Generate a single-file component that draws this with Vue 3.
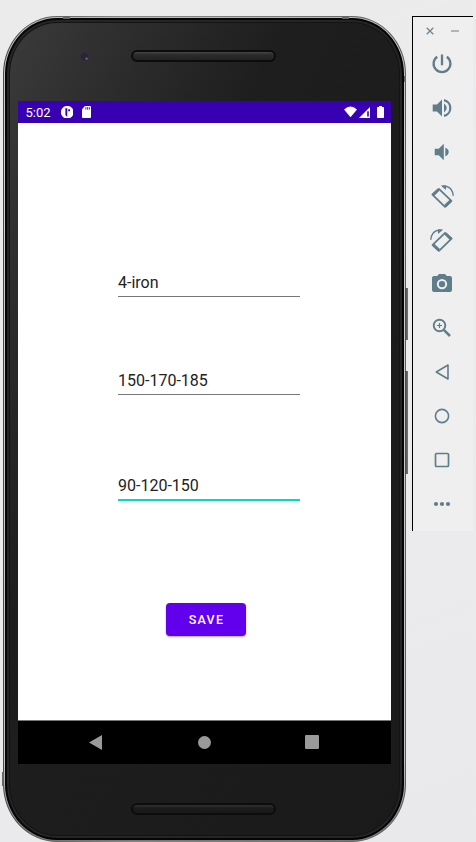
<script setup>
import { ref } from 'vue'

const fields = ref([
  { id: 'club', value: '4-iron' },
  { id: 'full', value: '150-170-185' },
  { id: 'short', value: '90-120-150', active: true },
])
</script>

<template>
  <main class="desktop">
    <section class="phone">
      <i class="side-key power"></i>
      <i class="side-key volume"></i>
      <i class="seam seam-tl"></i>
      <i class="seam seam-tr"></i>
      <i class="seam seam-bl"></i>
      <i class="seam seam-br"></i>
      <div class="rim">
        <div class="face">
          <header class="forehead">
            <span class="camera"></span>
            <span class="speaker"></span>
          </header>

          <div class="screen">
            <div class="status">
              <span class="clock">5:02</span>
              <svg class="s-app" viewBox="0 0 12 12">
                <circle cx="6" cy="6" r="6.1" fill="#fff" />
                <path d="M4.2 2.2H6V10.2Q4.2 9.6 4.2 8Z" fill="#3700b3" />
                <path d="M6.9 3.2H8.7V5H6.9Z" fill="#3700b3" />
              </svg>
              <svg class="s-card" viewBox="0 0 9 12">
                <path d="M3 0H8Q9 0 9 1V11Q9 12 8 12H1Q0 12 0 11V3.2Z" fill="#fff" />
                <path d="M3.9 1.2V3.6M5.6 1.2V3.6M7.3 1.2V3.6" stroke="#3700b3" stroke-width=".9" />
              </svg>
              <span class="grow"></span>
              <svg class="s-wifi" viewBox="0 0 14 12">
                <path d="M0 3.2Q7 -2.8 14 3.2L7 11.6Z" fill="#fff" />
              </svg>
              <svg class="s-cell" viewBox="0 0 11 11">
                <path d="M11 0V11H0Z" fill="#fff" />
                <path d="M8.2 4.2H9.8V9.6H8.2Z" fill="#3700b3" />
              </svg>
              <svg class="s-batt" viewBox="0 0 7 12">
                <path d="M2 0H5V1H6.4Q7 1 7 1.8V11.2Q7 12 6.4 12H.6Q0 12 0 11.2V1.8Q0 1 .6 1H2Z" fill="#fff" />
              </svg>
            </div>

            <div class="content">
              <div v-for="f in fields" :key="f.id" class="field" :class="[f.id, { active: f.active }]">
                {{ f.value }}
              </div>
              <button class="save" type="button">SAVE</button>
            </div>

            <nav class="navbar">
              <svg class="n-back" viewBox="0 0 13 15"><path d="M13 0V15L0 7.5Z" /></svg>
              <svg class="n-home" viewBox="0 0 13 13"><circle cx="6.5" cy="6.5" r="6.5" /></svg>
              <svg class="n-apps" viewBox="0 0 14 14"><rect width="14" height="14" rx="1" /></svg>
            </nav>
          </div>

          <footer class="chin"><span class="speaker"></span></footer>
        </div>
      </div>
    </section>

    <aside class="toolbar">
      <div class="window-keys">
        <svg viewBox="0 0 8 8"><path d="M.7 .7L7.3 7.3M7.3 .7L.7 7.3" stroke="#6b8792" stroke-width="1.3" /></svg>
        <svg class="min" viewBox="0 0 8 8"><path d="M0 4H8" stroke="#9fb1b8" stroke-width="1.8" /></svg>
      </div>
      <svg class="tool" viewBox="0 0 24 24">
        <path d="M7.2 4.8A8.4 8.4 0 1 0 16.8 4.8M12 2.6V13.2" fill="none" stroke="#607d8b" stroke-width="2.3" />
      </svg>
      <svg class="tool" viewBox="0 0 24 24">
        <path d="M2.7 8.6V15.4H7L12 20.4V3.6L7 8.6Z" fill="#607d8b" />
        <path d="M14 7.6Q16.7 9.3 16.7 12T14 16.4Z" fill="#607d8b" />
        <path d="M14 4.1A8.1 8.1 0 0 1 14 19.9" fill="none" stroke="#607d8b" stroke-width="2.2" />
      </svg>
      <svg class="tool" viewBox="0 0 24 24">
        <path d="M4.7 8.8V15.2H8.7L13.8 20.2V3.8L8.7 8.8Z" fill="#607d8b" />
        <path d="M15.3 7.6Q18.7 9.2 18.7 12T15.3 16.4Z" fill="#607d8b" />
      </svg>
      <svg class="tool" viewBox="0 0 24 24">
        <g fill="none" stroke="#607d8b" stroke-linejoin="round">
          <path d="M8.9 4.9L21.4 16.9L15 22.9L2.4 10.7Z" stroke-width="1.8" />
          <path d="M8.7 5.5L3.1 10.8M20.7 16.9L15.1 22.1" stroke-width="3" />
          <path d="M12.6 2.5Q18.2 1.6 21.2 5.6Q23.2 8.3 23.2 11.7" stroke-width="1.5" />
        </g>
        <path d="M10.8 1.5L16 1.2V5.9Z" fill="#607d8b" />
      </svg>
      <svg class="tool mirrored" viewBox="0 0 24 24">
        <g fill="none" stroke="#607d8b" stroke-linejoin="round">
          <path d="M8.9 4.9L21.4 16.9L15 22.9L2.4 10.7Z" stroke-width="1.8" />
          <path d="M8.7 5.5L3.1 10.8M20.7 16.9L15.1 22.1" stroke-width="3" />
          <path d="M12.6 2.5Q18.2 1.6 21.2 5.6Q23.2 8.3 23.2 11.7" stroke-width="1.5" />
        </g>
        <path d="M10.8 1.5L16 1.2V5.9Z" fill="#607d8b" />
      </svg>
      <svg class="tool" viewBox="0 0 24 24">
        <path d="M9 2.1L7.2 4.1H4A2 2 0 0 0 2 6.1V18A2 2 0 0 0 4 20H20A2 2 0 0 0 22 18V6.1A2 2 0 0 0 20 4.1H16.8L15 2.1Z" fill="#607d8b" />
        <circle cx="12" cy="12.1" r="4.2" fill="#607d8b" stroke="#efefef" stroke-width="2" />
      </svg>
      <svg class="tool" viewBox="0 0 24 24">
        <g fill="none" stroke="#607d8b">
          <circle cx="9.5" cy="9.5" r="5.8" stroke-width="1.9" />
          <path d="M13.8 13.8L20 20" stroke-width="2.5" />
          <path d="M9.5 6.9V12.1M6.9 9.5H12.1" stroke-width="1.2" />
        </g>
      </svg>
      <svg class="tool" viewBox="0 0 24 24">
        <path d="M18 5V19L6.3 12Z" fill="none" stroke="#607d8b" stroke-width="1.6" stroke-linejoin="round" />
      </svg>
      <svg class="tool" viewBox="0 0 24 24">
        <circle cx="12" cy="12" r="6.6" fill="none" stroke="#607d8b" stroke-width="1.6" />
      </svg>
      <svg class="tool" viewBox="0 0 24 24">
        <rect x="5.5" y="5.5" width="13" height="13" rx="1" fill="none" stroke="#607d8b" stroke-width="1.7" />
      </svg>
      <svg class="tool" viewBox="0 0 24 24" fill="#607d8b">
        <circle cx="6" cy="12" r="2.1" /><circle cx="12" cy="12" r="2.1" /><circle cx="18" cy="12" r="2.1" />
      </svg>
    </aside>
  </main>
</template>

<style>
body {
  margin: 0;
  background: #ebebed;
}
</style>

<style scoped>
* {
  box-sizing: border-box;
}
.desktop {
  display: flex;
  align-items: flex-start;
  gap: 6px;
  width: 476px;
  height: 842px;
  padding: 16px 0 0 3px;
  overflow: hidden;
  background: linear-gradient(160deg, #ebebec, #ececee 50%, #e9e9eb);
  font-family: Roboto, "Liberation Sans", sans-serif;
}
.phone {
  position: relative;
  flex: none;
  width: 403px;
  height: 826px;
  padding: 1px;
  border-radius: 54px / 58px;
  background: linear-gradient(90deg, #4a4a4a, #888 30%, #777 70%, #5c5c5c);
}
.rim {
  height: 100%;
  padding: 1px;
  border-radius: 53px / 57px;
  background: linear-gradient(180deg, #b5b5b5, #d0d0d0 15%, #c4c4c4 90%, #777);
}
.face {
  display: flex;
  flex-direction: column;
  height: 100%;
  padding: 0 11px 0 11px;
  border: 2px solid #050505;
  border-radius: 52px / 56px;
  background: linear-gradient(115deg, #3b3b3b 0, #2f2f2f 14%, #1e1e1e 36%, #1a1a1a 100%);
  box-shadow: inset 0 0 0 2px #252525, inset 0 0 0 3px #141414;
}
.forehead {
  display: flex;
  flex: none;
  height: 81px;
  padding: 30px 0 0 60px;
}
.camera {
  width: 13px;
  height: 13px;
  margin-right: 40px;
  border-radius: 50%;
  background: radial-gradient(circle at 66% 66%, #8a6070 0 .6px, transparent 1.6px), radial-gradient(circle, #29243a 0 3px, #333135 5px);
}
.speaker {
  width: 145px;
  height: 12px;
  border: 2px solid #0c0c0c;
  border-radius: 6px;
  background: linear-gradient(#454545, #2b2b2b 35%, #222);
}
.screen {
  display: flex;
  flex: none;
  flex-direction: column;
  width: 373px;
  height: 663px;
  background: #fff;
}
.status {
  display: flex;
  flex: none;
  align-items: center;
  height: 22px;
  padding: 0 7px 0 7.5px;
  background: #3700b3;
  color: #fff;
}
.clock {
  width: 35px;
  padding-top: 1px;
  font-size: 13px;
  line-height: 21px;
}
.s-app { width: 12.5px; height: 12.5px; }
.s-card { width: 9px; height: 12px; margin-left: 9px; }
.grow { flex: 1; }
.s-wifi { width: 13px; height: 12px; }
.s-cell { width: 11px; height: 11px; margin-left: 2px; }
.s-batt { width: 7px; height: 12px; margin-left: 7px; }
.content {
  display: flex;
  flex: none;
  flex-direction: column;
  align-items: flex-start;
  height: 598px;
  padding: 146px 0 0 100px;
  border-bottom: 1px solid #777;
}
.field {
  width: 182px;
  height: 28px;
  border-bottom: 1px solid #777;
  color: #222;
  font-size: 16px;
  line-height: 27px;
}
.field.full { margin-top: 70px; }
.field.short { margin-top: 77px; }
.field.active {
  height: 29px;
  border-bottom: 2px solid #03dac5;
}
.save {
  width: 80px;
  height: 33px;
  margin: 102px 0 0 48px;
  padding: 0 0 0 1px;
  border: 0;
  border-radius: 4px;
  background: #6200ee;
  box-shadow: 0 1px 2px rgba(0, 0, 0, .35);
  color: #fff;
  font: 500 12.5px/33px Roboto, "Liberation Sans", sans-serif;
  letter-spacing: 1.3px;
}
.navbar {
  display: flex;
  flex: none;
  align-items: center;
  height: 43px;
  padding: 0 0 1px 71px;
  background: #000;
  fill: #9a9a9a;
}
.n-back { width: 13px; height: 15px; }
.n-home { width: 13px; height: 13px; margin-left: 96px; }
.n-apps { width: 14px; height: 14px; margin-left: 94px; }
.chin {
  padding: 39px 0 0 113px;
}
.chin .speaker {
  display: block;
  background: linear-gradient(#303030, #1c1c1c 40%, #181818);
}
.side-key {
  position: absolute;
  right: -2px;
  width: 3px;
  background: linear-gradient(90deg, #444, #777);
}
.power { top: 272px; height: 52px; }
.volume { top: 355px; height: 103px; }
.seam {
  position: absolute;
  background: #666;
}
.seam-tl { left: 60px; top: 0; width: 7px; height: 3px; }
.seam-tr { right: 57px; top: 0; width: 7px; height: 3px; }
.seam-bl { left: -1px; top: 756px; width: 2px; height: 14px; }
.seam-br { right: 0; top: 60px; width: 2px; height: 6px; }
.toolbar {
  display: flex;
  flex: none;
  flex-direction: column;
  align-items: flex-start;
  width: 61px;
  height: 515px;
  padding-left: 13px;
  border-top: 1px solid #000;
  border-left: 1px solid #000;
  background: #efefef;
}
.window-keys {
  display: flex;
  flex: none;
  gap: 17px;
  width: 34px;
  height: 19px;
  padding-top: 10px;
}
.window-keys svg { width: 8px; height: 8px; flex: none; }
.tool {
  flex: none;
  width: 24px;
  height: 24px;
  margin: 20px 0 0 4px;
}
.window-keys + .tool { margin-top: 16px; }
.mirrored { transform: scaleX(-1); }
</style>
